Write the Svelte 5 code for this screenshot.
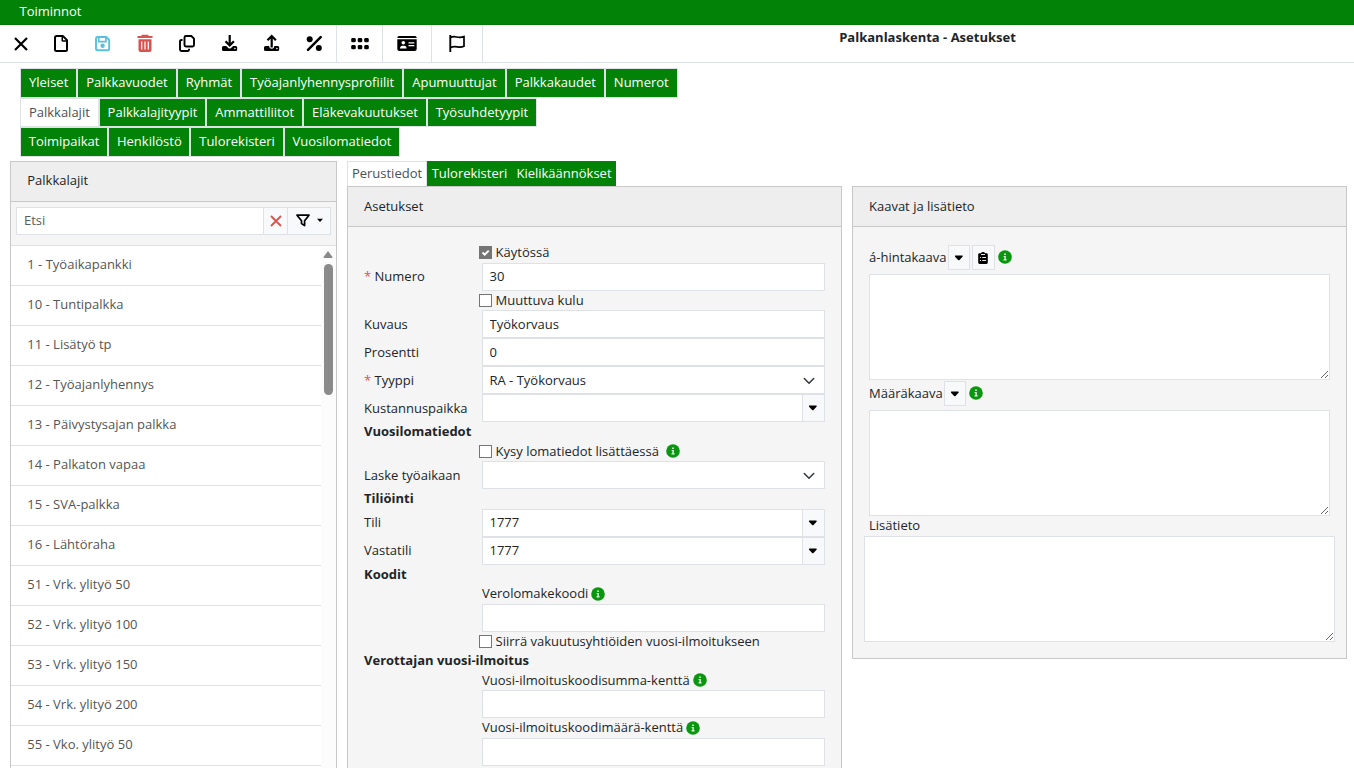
<script lang="ts">
    const tabRows = [
        ["Yleiset", "Palkkavuodet", "Ryhmät", "Työajanlyhennysprofiilit", "Apumuuttujat", "Palkkakaudet", "Numerot"],
        ["Palkkalajit", "Palkkalajityypit", "Ammattiliitot", "Eläkevakuutukset", "Työsuhdetyypit"],
        ["Toimipaikat", "Henkilöstö", "Tulorekisteri", "Vuosilomatiedot"],
    ];
    let activeTab = $state("Palkkalajit");

    const items = [
        "1 - Työaikapankki",
        "10 - Tuntipalkka",
        "11 - Lisätyö tp",
        "12 - Työajanlyhennys",
        "13 - Päivystysajan palkka",
        "14 - Palkaton vapaa",
        "15 - SVA-palkka",
        "16 - Lähtöraha",
        "51 - Vrk. ylityö 50",
        "52 - Vrk. ylityö 100",
        "53 - Vrk. ylityö 150",
        "54 - Vrk. ylityö 200",
        "55 - Vko. ylityö 50",
    ];

    type Row = {
        kind: "check" | "text" | "select" | "lookup" | "heading" | "caption";
        label?: string;
        value?: string;
        required?: boolean;
        checked?: boolean;
        info?: boolean;
    };

    const rows: Row[] = [
        { kind: "check", label: "Käytössä", checked: true },
        { kind: "text", label: "Numero", value: "30", required: true },
        { kind: "check", label: "Muuttuva kulu" },
        { kind: "text", label: "Kuvaus", value: "Työkorvaus" },
        { kind: "text", label: "Prosentti", value: "0" },
        { kind: "select", label: "Tyyppi", value: "RA - Työkorvaus", required: true },
        { kind: "lookup", label: "Kustannuspaikka", value: "" },
        { kind: "heading", label: "Vuosilomatiedot" },
        { kind: "check", label: "Kysy lomatiedot lisättäessä", info: true },
        { kind: "select", label: "Laske työaikaan", value: "" },
        { kind: "heading", label: "Tiliöinti" },
        { kind: "lookup", label: "Tili", value: "1777" },
        { kind: "lookup", label: "Vastatili", value: "1777" },
        { kind: "heading", label: "Koodit" },
        { kind: "caption", label: "Verolomakekoodi", info: true },
        { kind: "text", value: "" },
        { kind: "check", label: "Siirrä vakuutusyhtiöiden vuosi-ilmoitukseen" },
        { kind: "heading", label: "Verottajan vuosi-ilmoitus" },
        { kind: "caption", label: "Vuosi-ilmoituskoodisumma-kenttä", info: true },
        { kind: "text", value: "" },
        { kind: "caption", label: "Vuosi-ilmoituskoodimäärä-kenttä", info: true },
        { kind: "text", value: "" },
    ];
</script>

{#snippet info()}
    <svg class="info" width="14" height="14" viewBox="0 0 14 14">
        <circle cx="7" cy="7" r="6.8" fill="#0a960f" />
        <path d="M6.200 3.600h1.600v1.500H6.200zM5.600 6h2.200v3.300h.8v1.100H5.500V9.300h.9V7.100h-.8z" fill="#e4f5e4" />
    </svg>
{/snippet}

{#snippet caret()}
    <svg width="10" height="6" viewBox="0 0 10 6">
        <path d="M1.300 .5h7q.8.5.2 1.200L5.500 4.900q-.7.6-1.400 0L1.100 1.700Q.5 1 1.300 .5z" />
    </svg>
{/snippet}

<div class="app">
    <header class="menubar">Toiminnot</header>

    <div class="toolbar">
        <div class="tools">
            <button class="tool first" aria-label="Sulje">
                <svg viewBox="0 0 20 20"><path d="M4 4l12 12M16 4L4 16" fill="none" stroke="#000" stroke-width="2.2" /></svg>
            </button>
            <button class="tool" aria-label="Uusi">
                <svg viewBox="0 0 20 20">
                    <path d="M5.8 2h6L16 6.2V15.500q0 1.500-1.500 1.500H5.500Q4 17 4 15.500V3.500Q4 2 5.800 2z" fill="none" stroke="#000" stroke-width="2" stroke-linejoin="round" />
                    <path d="M10.500 2h1.800L16 5.700v2h-4q-1.500 0-1.500-1.500z" />
                    <path d="M12 3.500V6.200h2.800z" fill="#fff" />
                </svg>
            </button>
            <button class="tool save" aria-label="Tallenna">
                <svg viewBox="0 0 20 20">
                    <path d="M4.500 3h8.700L16.200 6v8.500q0 1.700-1.700 1.700h-10Q3 16.200 3 14.500v-10Q3 3 4.500 3z" fill="none" stroke="currentColor" stroke-width="1.900" stroke-linejoin="round" />
                    <path d="M5.700 3.500v4.200h7.200V3.500" fill="none" stroke="currentColor" stroke-width="1.700" />
                    <circle cx="9.600" cy="11.700" r="2.200" fill="currentColor" />
                </svg>
            </button>
            <button class="tool trash" aria-label="Poista">
                <svg viewBox="0 0 20 20">
                    <path d="M7 .8h6l.8 1.200H17q.7 0 .7 1t-.7 1H3q-.7 0-.7-1T3 2h3.200z" fill="currentColor" />
                    <path d="M3.500 5.300h13V16q0 2-2 2h-9q-2 0-2-2z" fill="currentColor" />
                    <path d="M6.700 7.500v8M10 7.500v8M13.300 7.500v8" stroke="#fff" stroke-width="1.200" />
                </svg>
            </button>
            <button class="tool" aria-label="Kopioi">
                <svg viewBox="0 0 20 20" fill="none" stroke="#000" stroke-width="1.900" stroke-linejoin="round">
                    <path d="M9 2h5.300L17 4.700V11q0 1.500-1.500 1.500H9Q7.500 12.500 7.500 11V3.500Q7.500 2 9 2z" />
                    <path d="M5.500 6H4.300Q3 6 3 7.500v8Q3 17 4.500 17h6Q12 17 12 15.700v-1" />
                </svg>
            </button>
            <button class="tool" aria-label="Lataa">
                <svg viewBox="0 0 20 20">
                    <path d="M10.700 1v10M6.500 7.300l4.200 4.200 4.200-4.200" fill="none" stroke="#000" stroke-width="2.200" />
                    <path d="M4.500 12h2.700l2.200 2.100q1.300 1 2.600 0l2.200-2.100h2.700q1.300 0 1.300 1.500v2q0 1.500-1.500 1.500H4.500Q3 17 3 15.500v-2Q3 12 4.500 12z" />
                    <circle cx="15.900" cy="14.500" r=".8" fill="#fff" />
                </svg>
            </button>
            <button class="tool" aria-label="Lähetä">
                <svg viewBox="0 0 20 20">
                    <path d="M10.700 13.500v-11M6.500 6.200l4.200-4.200 4.200 4.200" fill="none" stroke="#000" stroke-width="2.200" />
                    <path d="M4.500 12h3.700q0 2.800 2.500 2.800t2.500-2.800h3.700q1.300 0 1.300 1.500v2q0 1.500-1.500 1.500H4.500Q3 17 3 15.500v-2Q3 12 4.500 12z" />
                    <circle cx="15.900" cy="14.500" r=".8" fill="#fff" />
                </svg>
            </button>
            <button class="tool" aria-label="Prosentti">
                <svg viewBox="0 0 20 20">
                    <circle cx="6.700" cy="5.200" r="3" />
                    <circle cx="15.800" cy="13.900" r="3" />
                    <path d="M17.700 3.200L5 15.900" stroke="#000" stroke-width="2.500" stroke-linecap="round" />
                </svg>
            </button>
        </div>
        <button class="tool boxed grid" aria-label="Ruudukko">
            <svg viewBox="0 0 20 20">
                {#each [4, 11] as y}
                    {#each [1.2, 7.700, 14.200] as x}
                        <rect {x} {y} width="4.600" height="4.300" rx="1.400" />
                    {/each}
                {/each}
            </svg>
        </button>
        <button class="tool boxed card" aria-label="Henkilökortti">
            <svg viewBox="0 0 20 20">
                <path d="M2 2h16q1.700 0 1.700 2H.3q0-2 1.700-2z" />
                <path d="M.3 5.300h19.400V15q0 2-2 2H2.300q-2 0-2-2z" />
                <g fill="#fff">
                    <circle cx="6.300" cy="8.800" r="1.800" />
                    <path d="M3 14.500q.2-2.800 2.300-2.800h2q2.100 0 2.300 2.800zM11.500 8.200h5.800v1.300h-5.800zM11.500 11h5.800v1.300h-5.800z" />
                </g>
            </svg>
        </button>
        <button class="tool boxed flag" aria-label="Lippu">
            <svg viewBox="0 0 20 20" fill="none" stroke="#000" stroke-width="1.700">
                <path d="M3.300 1v17" stroke-width="1.900" />
                <path d="M3.300 3.600C9 .8 10 5.200 17 2.600v9.700C11 15.200 10 10.600 3.300 13.500" />
            </svg>
        </button>
        <h1>Palkanlaskenta - Asetukset</h1>
    </div>

    <nav class="tabs">
        {#each tabRows as tabRow}
            <div class="tab-row">
                {#each tabRow as tab}
                    <button class="tab" class:active={tab === activeTab} onclick={() => (activeTab = tab)}>{tab}</button>
                {/each}
            </div>
        {/each}
    </nav>

    <main>
        <section class="panel sidebar">
            <h2>Palkkalajit</h2>
            <div class="search">
                <input placeholder="Etsi" />
                <button class="clear" aria-label="Tyhjennä">
                    <svg width="12" height="12" viewBox="0 0 12 12"><path d="M1 1l10 10M11 1L1 11" stroke="#d9534f" stroke-width="1.800" /></svg>
                </button>
                <button class="filter" aria-label="Suodata">
                    <svg width="14" height="13" viewBox="0 0 14 13">
                        <path d="M1 1.200h12L8.600 6.800v4.800L5.500 9.500V6.800z" fill="none" stroke="#000" stroke-width="1.700" stroke-linejoin="round" />
                    </svg>
                    <svg width="6" height="6" viewBox="0 0 6 6"><path d="M0 .8h6L3 4z" /></svg>
                </button>
            </div>
            <div class="list">
                <ul>
                    {#each items as item}
                        <li>{item}</li>
                    {/each}
                </ul>
                <div class="scrollbar">
                    <svg width="10" height="7" viewBox="0 0 10 7"><path d="M5 0l4.500 6q.2 1-.7 1H1.200Q.3 7 .5 6z" fill="#8b8b8b" /></svg>
                    <div class="thumb"></div>
                </div>
            </div>
        </section>

        <div class="detail">
            <div class="subtabs">
                <button class="current">Perustiedot</button>
                <button>Tulorekisteri</button>
                <button class="last">Kielikäännökset</button>
            </div>
            <div class="columns">
                <section class="panel settings">
                    <h2>Asetukset</h2>
                    <div class="form">
                        {#each rows as row}
                            {#if row.kind === "heading"}
                                <div class="line heading">{row.label}</div>
                            {:else if row.kind === "caption"}
                                <div class="line caption">{row.label}{@render info()}</div>
                            {:else if row.kind === "check"}
                                <label class="line check">
                                    <span class="box" class:checked={row.checked}>
                                        {#if row.checked}
                                            <svg width="13" height="13" viewBox="0 0 13 13"><path d="M3.500 6.500l2.200 2.200 4-4" fill="none" stroke="#fff" stroke-width="1.900" /></svg>
                                        {/if}
                                    </span>
                                    {row.label}
                                    {#if row.info}<span class="gap">{@render info()}</span>{/if}
                                </label>
                            {:else}
                                <div class="field">
                                    <span class="label">
                                        {#if row.required}<span class="star">*</span>{/if}
                                        {row.label ?? ""}
                                    </span>
                                    {#if row.kind === "select"}
                                        <div class="select">
                                            {row.value}
                                            <svg width="12" height="8" viewBox="0 0 12 8"><path d="M1.300 1.500L6 6.200l4.700-4.700" fill="none" stroke="#343a40" stroke-width="1.600" stroke-linecap="round" /></svg>
                                        </div>
                                    {:else}
                                        <input value={row.value} />
                                        {#if row.kind === "lookup"}
                                            <button class="drop" aria-label="Valitse">{@render caret()}</button>
                                        {/if}
                                    {/if}
                                </div>
                            {/if}
                        {/each}
                    </div>
                </section>

                <section class="panel formulas">
                    <h2>Kaavat ja lisätieto</h2>
                    <div class="formula-body">
                        <div class="formula-head">
                            á-hintakaava
                            <button class="small" aria-label="Valitse">{@render caret()}</button>
                            <button class="small clip" aria-label="Leikepöytä">
                                <svg width="10" height="12" viewBox="0 0 10 12">
                                    <path d="M1.500 1.200H3Q3.300 0 5 0t2 1.200h1.500q1.300 0 1.300 1.300v8q0 1.400-1.300 1.400h-7Q.2 11.900.2 10.500v-8q0-1.300 1.300-1.300z" />
                                    <path d="M3 2.500h4M2 5.500h1M4.200 5.500H8M2 8.500h1M4.200 8.500H8" stroke="#fff" stroke-width=".9" />
                                </svg>
                            </button>
                            {@render info()}
                        </div>
                        <textarea></textarea>
                        <div class="formula-head second">
                            Määräkaava
                            <button class="small" aria-label="Valitse">{@render caret()}</button>
                            {@render info()}
                        </div>
                        <textarea></textarea>
                        <div class="note">Lisätieto</div>
                        <textarea class="wide"></textarea>
                    </div>
                </section>
            </div>
        </div>
    </main>
</div>

<style>
    :global(body) {
        background: #fff;
        overflow: hidden;
    }

    .app,
    .app * {
        box-sizing: border-box;
    }

    .app {
        height: 768px;
        overflow: hidden;
        display: flex;
        flex-direction: column;
        font: 13px/19.5px "Open Sans", sans-serif;
        color: #212529;
    }

    button,
    input,
    textarea {
        font: inherit;
        margin: 0;
        padding: 0;
        border: 0;
        border-radius: 0;
        outline: 0;
    }

    svg {
        display: block;
        flex: none;
    }

    .menubar {
        flex: none;
        height: 25px;
        padding: 2px 19.5px;
        background: #028207;
        border-bottom: 1px solid #027a05;
        color: #fff;
    }

    .toolbar {
        flex: none;
        height: 38px;
        display: flex;
        border-bottom: 1px solid #dee2e6;
    }

    .tools {
        width: 337px;
        display: flex;
        border-right: 1px solid #dee2e6;
    }

    .tool {
        width: 42px;
        padding: 9px 0 0 11px;
        background: none;
        display: flex;
        align-items: flex-start;
    }

    .tool svg {
        width: 20px;
        height: 20px;
    }

    .tool.first {
        width: 40px;
    }

    .save {
        color: #5bc0de;
    }

    .trash {
        color: #d9534f;
    }

    .boxed {
        border-right: 1px solid #dee2e6;
    }

    .grid {
        width: 46px;
        padding-left: 13px;
    }

    .card {
        width: 49px;
        padding-left: 14px;
    }

    .flag {
        width: 51px;
        padding-left: 15px;
    }

    h1 {
        flex: 1;
        margin: 0;
        padding: 3px 0 0 18px;
        text-align: center;
        font-size: 13px;
        font-weight: 700;
        line-height: 19.5px;
    }

    .tabs {
        flex: none;
        height: 98px;
        padding: 5px 20px 0;
    }

    .tab-row {
        display: flex;
        height: 30px;
    }

    .tab {
        padding: 0 8px 1px;
        border: 1px solid #dee2e6;
        background: #028207;
        color: #fff;
    }

    .tab-row:nth-child(2) {
        height: 29px;
    }

    .tab-row:nth-child(2) .tab {
        padding: 1px 7.9px 0;
    }

    .tab-row:nth-child(3) .tab {
        padding: 0 7.75px 1px;
    }

    .tab.active {
        background: #fff;
        color: #495057;
    }

    main {
        flex: 1;
        min-height: 0;
        display: flex;
        gap: 10px;
        padding: 0 7px 0 10px;
    }

    .panel {
        border: 1px solid #c8c8c8;
        background: #f5f5f5;
    }

    h2 {
        margin: 0;
        height: 40px;
        padding: 10px 16px 9px;
        background: #eee;
        border-bottom: 1px solid #c8c8c8;
        font-size: 13px;
        font-weight: 400;
        line-height: 19.5px;
    }

    .sidebar {
        width: 327px;
        height: 640px;
    }

    .sidebar h2 {
        padding: 9px 16.3px;
    }

    .search {
        height: 43px;
        padding: 5px 5px 10px;
        display: flex;
    }

    .search input {
        width: 248px;
        padding: 0 7px;
        border: 1px solid #dee2e6;
        background: #fff;
    }

    .search input::placeholder {
        color: #595c5f;
        opacity: 1;
    }

    .search button {
        display: flex;
        align-items: center;
        justify-content: center;
        padding-bottom: 1px;
        border: 1px solid #dee2e6;
        border-left: 0;
        background: #f8f9fa;
    }

    .search .clear {
        width: 24px;
    }

    .filter {
        width: 43px;
        gap: 7px;
    }

    .list {
        display: flex;
        height: 560px;
        border-top: 1px solid #dee2e6;
        background: #fff;
    }

    ul {
        flex: 1;
        margin: 0;
        padding: 0;
        list-style: none;
    }

    li {
        height: 40px;
        padding: 9px 16.3px;
        border-bottom: 1px solid #dee2e6;
        color: #555;
    }

    .scrollbar {
        width: 15px;
        padding: 5px 3px 0 2px;
        display: flex;
        flex-direction: column;
        align-items: center;
        gap: 6px;
        background: #fcfcfc;
    }

    .thumb {
        width: 9px;
        height: 131px;
        border-radius: 5px;
        background: #8b8b8b;
    }

    .detail {
        flex: 1;
    }

    .subtabs {
        display: flex;
        height: 25px;
    }

    .subtabs button {
        width: 85px;
        background: #028207;
        color: #fff;
    }

    .subtabs .current {
        width: 80px;
        padding-bottom: 1px;
        border: 1px solid #dee2e6;
        border-bottom: 0;
        background: #fff;
        color: #495057;
    }

    .subtabs .last {
        width: 104px;
    }

    .columns {
        display: flex;
        align-items: flex-start;
        gap: 10px;
    }

    .columns .panel {
        width: 495px;
    }

    .settings {
        height: 620px;
    }

    .form {
        padding: 16.2px 16px 0;
    }

    .line {
        height: 19.5px;
        display: flex;
        align-items: center;
    }

    .heading {
        font-weight: 700;
    }

    .caption {
        padding-left: 118px;
        gap: 3px;
    }

    .check {
        padding-left: 115px;
        gap: 3.6px;
    }

    .box {
        width: 13px;
        height: 13px;
        border: 1px solid #767676;
        background: #fff;
    }

    .box.checked {
        border: 0;
        background: #757575;
    }

    .gap {
        padding-left: 3px;
    }

    .field {
        display: flex;
        height: 28px;
    }

    .label {
        width: 118px;
        padding-top: 4.4px;
        white-space: nowrap;
    }

    .star {
        color: #d9534f;
    }

    .field input,
    .select {
        flex: 1;
        min-width: 0;
        padding: 0.7px 6.5px 0;
        border: 1px solid #dee2e6;
        background: #fff;
        color: #212529;
    }

    .select {
        padding-right: 9px;
        display: flex;
        align-items: center;
        justify-content: space-between;
    }

    .select svg {
        margin-left: auto;
    }

    .drop,
    .small {
        display: flex;
        align-items: center;
        justify-content: center;
        border: 1px solid #dee2e6;
        background: #f8f9fa;
    }

    .drop {
        width: 22px;
        padding-right: 1px;
        border-left: 0;
    }

    .formulas {
        height: 473px;
    }

    .formula-body {
        padding: 18px 16.4px 0 16px;
        display: flex;
        flex-direction: column;
    }

    .formula-head {
        height: 29px;
        padding-bottom: 4px;
        display: flex;
        align-items: center;
        gap: 1.5px;
    }

    .second {
        margin-top: 1px;
    }

    .small {
        width: 22px;
        height: 25px;
    }

    .clip {
        width: 23px;
    }

    .formula-head .info {
        margin: 0 0 1px 1.5px;
    }

    textarea {
        display: block;
        height: 106px;
        border: 1px solid #dee2e6;
        background: #fff;
        resize: both;
    }

    .note {
        height: 20px;
    }

    .wide {
        margin: 0 -5px;
    }
</style>
